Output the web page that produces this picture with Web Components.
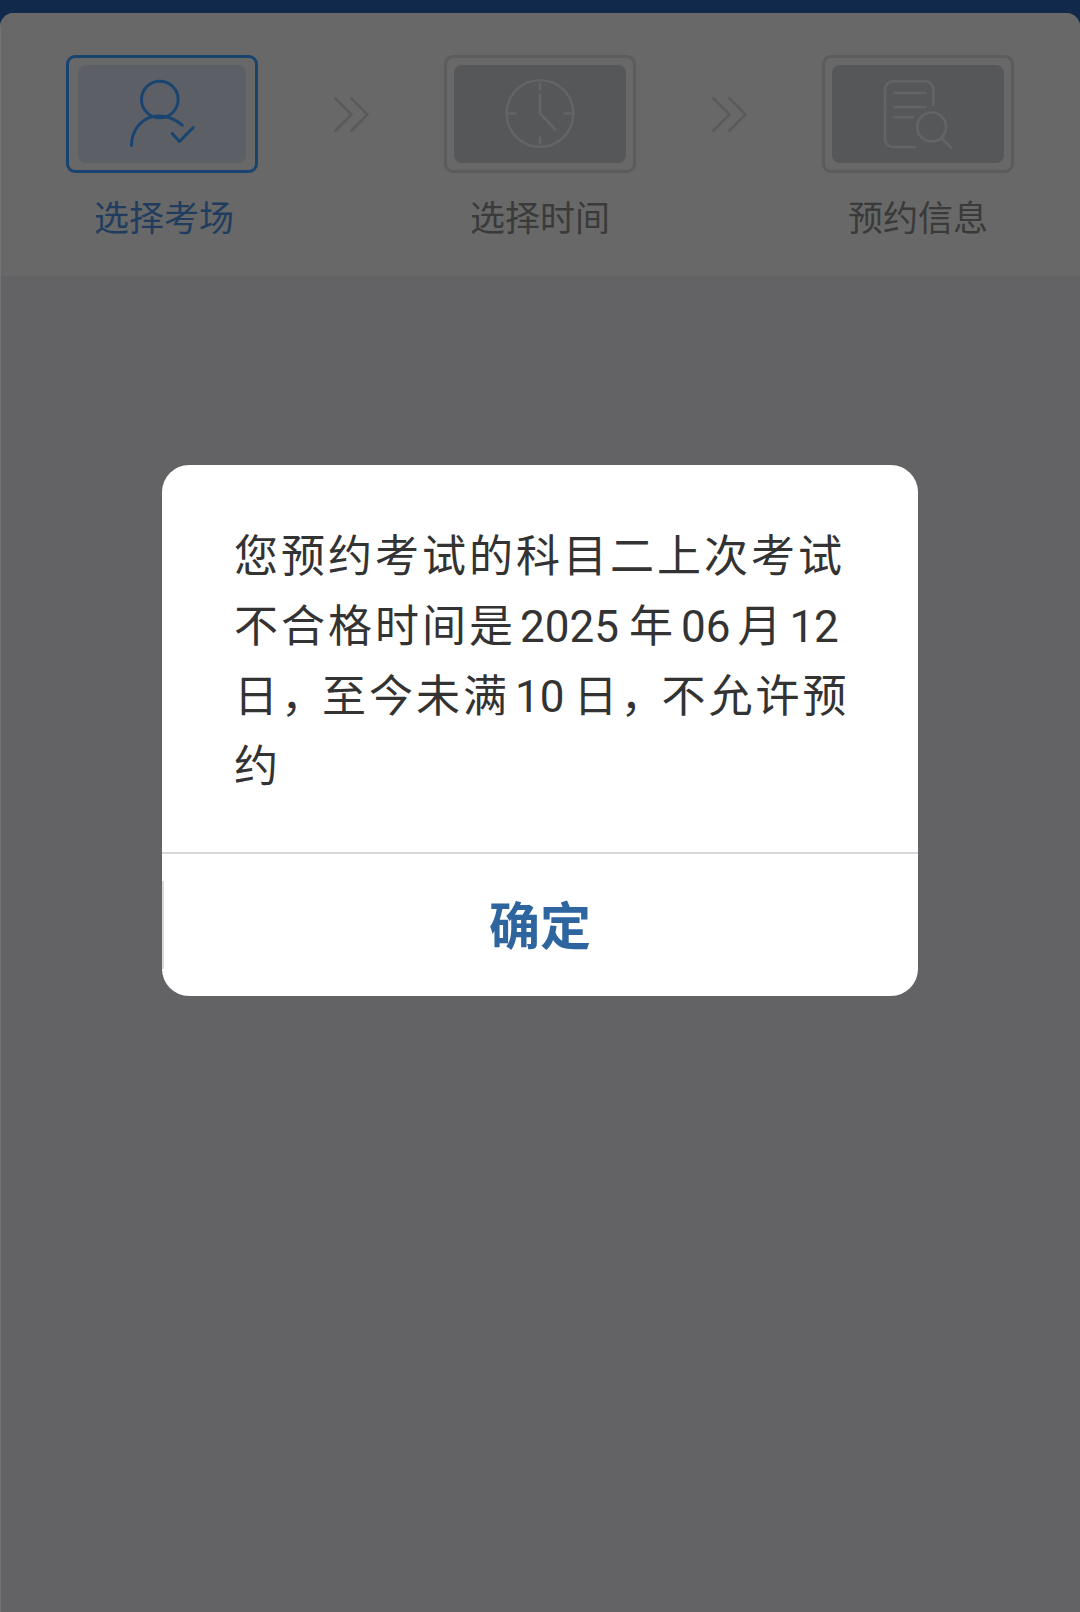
<!DOCTYPE html>
<html lang="zh-CN">
<head>
<meta charset="utf-8">
<title>选择考场</title>
<style>
  html, body { margin: 0; padding: 0; height: 100%; }
  body { background: #636365; font-family: "Noto Sans CJK SC", "Noto Sans", sans-serif; overflow: hidden; }
</style>
</head>
<body>
<booking-page>
  <step-bar>
    <step-item label="选择考场" active>
      <svg viewBox="0 0 80 80" width="80" height="80" fill="none" stroke="#194470" stroke-width="3" stroke-linecap="round" stroke-linejoin="round">
        <circle cx="37.8" cy="25.5" r="18.3"/>
        <path d="M9.5 71.5C9.5 54 22 42 36 42c9.5 0 18 3.5 24.2 9.2"/>
        <path d="M50.2 59.5l7.3 8 13.7-14"/>
      </svg>
    </step-item>
    <step-arrow></step-arrow>
    <step-item label="选择时间">
      <svg viewBox="0 0 80 80" width="80" height="80" fill="none" stroke="#646464" stroke-width="2.6" stroke-linecap="round" stroke-linejoin="round">
        <circle cx="40" cy="39.5" r="33.3"/>
        <path d="M40 9.5v6M40 63.5v6M9 39.5h6.500M64.500 39.5h6M40 20.250V39.500L55.300 55.500"/>
      </svg>
    </step-item>
    <step-arrow></step-arrow>
    <step-item label="预约信息">
      <svg viewBox="0 0 80 80" width="80" height="80" fill="none" stroke="#646464" stroke-width="2.6" stroke-linecap="round" stroke-linejoin="round">
        <path d="M55.300 31.250v-16a8 8 0 0 0-8-8H15a8 8 0 0 0-8 8V65a8 8 0 0 0 8 8h22"/>
        <path d="M16 19h32M16 33h32M16 43.250h19"/>
        <circle cx="53.700" cy="53" r="14.500"/>
        <path d="M64.700 65.250L73 73.500"/>
      </svg>
    </step-item>
  </step-bar>
  <alert-dialog action="确定">
    您预约考试的科目二上次考试<br>
    不合格时间是<num-text first>2025</num-text>年<num-text>06</num-text>月<num-text>12</num-text><br>
    日<comma-text>，</comma-text>至今未满<num-text wide>10</num-text>日<comma-text>，</comma-text>不允许预<br>
    约
  </alert-dialog>
</booking-page>

<script>
class BookingPage extends HTMLElement {
    constructor() {
        super();
        this.attachShadow({ mode: 'open' });
        this.shadowRoot.innerHTML = `
            <style>
                :host {
                    display: block;
                    position: relative;
                    height: 1612px;
                    background: #112a4c;
                    padding-top: 13px;
                    box-sizing: border-box;
                }
                .body {
                    height: 1599px;
                    background: #636365;
                    border-radius: 14px 14px 0 0;
                    overflow: hidden;
                    border-left: 1px solid #737375;
                    box-sizing: border-box;
                }
            </style>
            <div class="body"><slot></slot></div>
        `;
    }
}

class StepBar extends HTMLElement {
    constructor() {
        super();
        this.attachShadow({ mode: 'open' });
        this.shadowRoot.innerHTML = `
            <style>
                :host {
                    display: flex;
                    justify-content: space-between;
                    align-items: flex-start;
                    box-sizing: border-box;
                    height: 263px;
                    padding: 42px 66px 0 65px;
                    background: #686868;
                }
            </style>
            <slot></slot>
        `;
    }
}

class StepItem extends HTMLElement {
    constructor() {
        super();
        this.attachShadow({ mode: 'open' });
    }

    connectedCallback() {
        const label = this.getAttribute('label') || '';
        this.shadowRoot.innerHTML = `
            <style>
                :host {
                    display: flex;
                    flex-direction: column;
                    align-items: center;
                    width: 192px;
                    --edge: #5c5c5c;
                    --fill: #565759;
                    --ink: #3a3a3a;
                    --inset: 7px;
                    --shift: 0px;
                }
                :host([active]) {
                    --edge: #194470;
                    --fill: #5c5f65;
                    --ink: #203d5f;
                    --inset: 9px;
                    --shift: 4px;
                }
                .box {
                    box-sizing: border-box;
                    width: 192px;
                    height: 118px;
                    padding: 7px var(--inset);
                    border: 3px solid var(--edge);
                    border-radius: 9px;
                }
                .fill {
                    height: 100%;
                    display: flex;
                    align-items: center;
                    justify-content: center;
                    background: var(--fill);
                    border-radius: 8px;
                }
                ::slotted(svg) { display: block; }
                .label {
                    margin-top: 18px;
                    padding-left: var(--shift);
                    font-size: 35px;
                    line-height: 50px;
                    color: var(--ink);
                    white-space: nowrap;
                }
            </style>
            <div class="box"><div class="fill"><slot></slot></div></div>
            <div class="label">${label}</div>
        `;
    }
}

class StepArrow extends HTMLElement {
    constructor() {
        super();
        this.attachShadow({ mode: 'open' });
        this.shadowRoot.innerHTML = `
            <style>
                :host { display: block; width: 36px; height: 37px; margin-top: 41px; }
                svg { display: block; }
            </style>
            <svg viewBox="0 0 36 37" width="36" height="37" fill="none" stroke="#5a5a5a" stroke-width="2.600">
                <path d="M1.500 1.500L18.500 18.500L1.500 35.500M17.500 1.500L34.500 18.500L17.500 35.500"/>
            </svg>
        `;
    }
}

class AlertDialog extends HTMLElement {
    constructor() {
        super();
        this.attachShadow({ mode: 'open' });
    }

    connectedCallback() {
        const action = this.getAttribute('action') || '确定';
        this.shadowRoot.innerHTML = `
            <style>
                :host {
                    position: absolute;
                    top: 465px;
                    left: 162px;
                    width: 756px;
                    background: #ffffff;
                    border-radius: 27px;
                    overflow: hidden;
                }
                .message {
                    padding: 53px 40px 54px 72px;
                    font-size: 44px;
                    line-height: 70px;
                    letter-spacing: 3px;
                    color: #333333;
                    white-space: nowrap;
                }
                .action {
                    position: relative;
                    height: 144px;
                    box-sizing: border-box;
                    border-top: 2px solid #d6d7d9;
                    padding-bottom: 5px;
                    display: flex;
                    align-items: center;
                    justify-content: center;
                    font-size: 51px;
                    font-weight: 700;
                    color: #2e659f;
                }
                .action::before {
                    content: "";
                    position: absolute;
                    left: 0;
                    top: 27px;
                    width: 2px;
                    height: 88px;
                    background: #d9d9d9;
                }
            </style>
            <div class="message"><slot></slot></div>
            <div class="action">${action}</div>
        `;
    }
}

// no whitespace around the slot here: an inline host would render it as a space
class NumText extends HTMLElement {
    constructor() {
        super();
        this.attachShadow({ mode: 'open' });
        this.shadowRoot.innerHTML = `<style>
            :host {
                display: inline;
                font-family: Roboto, "Noto Sans", sans-serif;
                font-size: 44px;
                line-height: 0;
                letter-spacing: 0;
                margin: 0 7px 0 5px;
            }
            :host([first]) { margin: 0 10px 0 4px; }
            :host([wide]) { margin: 0 9px 0 5px; }
        </style><slot></slot>`;
    }
}

class CommaText extends HTMLElement {
    constructor() {
        super();
        this.attachShadow({ mode: 'open' });
        this.shadowRoot.innerHTML = `<style>
            :host { display: inline; letter-spacing: -3px; }
        </style><slot></slot>`;
    }
}

customElements.define('booking-page', BookingPage);
customElements.define('step-bar', StepBar);
customElements.define('step-item', StepItem);
customElements.define('step-arrow', StepArrow);
customElements.define('alert-dialog', AlertDialog);
customElements.define('num-text', NumText);
customElements.define('comma-text', CommaText);
</script>
</body>
</html>
